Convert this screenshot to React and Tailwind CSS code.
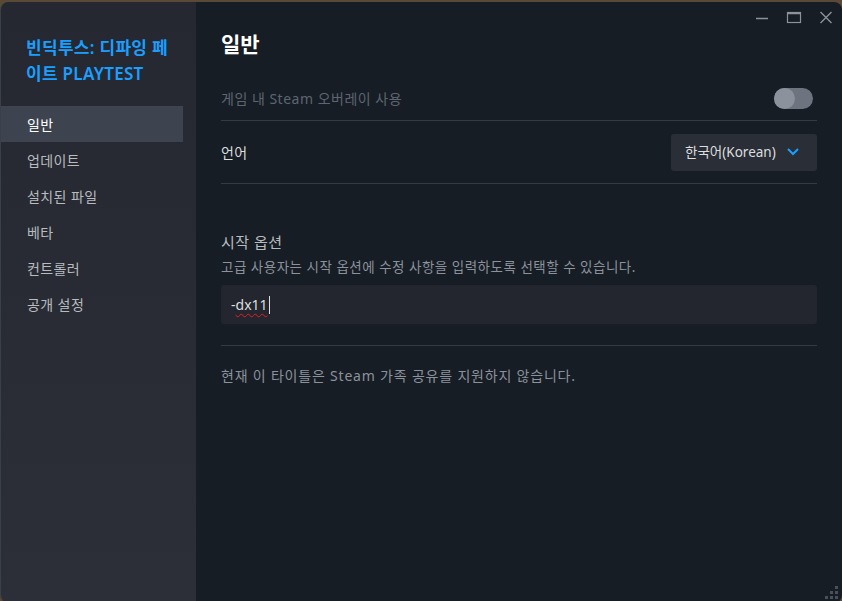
import React from "react";

const font = { fontFamily: "'Noto Sans', 'Noto Sans CJK KR', sans-serif" };

function NavItem({ label, active }) {
  return (
    <div
      className={`h-9 flex items-center pl-[26px] text-[14px] tracking-[0.4px] ${
        active ? "bg-[#3d4450] text-white" : "text-[#b8bcbf]"
      }`}
    >
      {label}
    </div>
  );
}

export default function App() {
  return (
    <div className="w-[842px] h-[601px] bg-[#5a4a35] overflow-hidden" style={font}>
      <div className="w-full h-full mt-[2px] rounded-t-[8px] rounded-b-[8px] overflow-hidden flex border-l border-[#3a3f48]">
        {/* Sidebar */}
        <div className="w-[195px] h-full bg-gradient-to-b from-[#252830] to-[#2c2f38] flex flex-col">
          <div className="pl-[25px] pr-3 pt-[33px] pb-[19px] text-[#1a9fff] text-[17px] leading-[26px] font-semibold tracking-[0.3px]">
            빈딕투스: 디파잉 페<br />이트 PLAYTEST
          </div>
          <div className="w-[182px] flex flex-col">
            <NavItem label="일반" active />
            <NavItem label="업데이트" />
            <NavItem label="설치된 파일" />
            <NavItem label="베타" />
            <NavItem label="컨트롤러" />
            <NavItem label="공개 설정" />
          </div>
        </div>

        {/* Main */}
        <div className="flex-1 h-full bg-[#171d25] relative flex flex-col pl-[25px] pr-[25px]">
          {/* Window controls */}
          <div className="absolute top-[6px] right-[8px] flex items-center gap-[16px] text-[#8b929a]">
            <svg width="16" height="16" viewBox="0 0 16 16">
              <line x1="2" y1="10.5" x2="14" y2="10.5" stroke="currentColor" strokeWidth="1.5" />
            </svg>
            <svg width="16" height="16" viewBox="0 0 16 16">
              <rect x="1.5" y="4.5" width="13" height="10" fill="none" stroke="currentColor" strokeWidth="1.2" />
              <line x1="1.5" y1="5.5" x2="14.5" y2="5.5" stroke="currentColor" strokeWidth="1.5" />
            </svg>
            <svg width="16" height="16" viewBox="0 0 16 16">
              <path d="M2.5 4 L13.5 15 M13.5 4 L2.5 15" stroke="currentColor" strokeWidth="1.4" fill="none" />
            </svg>
          </div>

          <div className="pt-[26px] text-white text-[21px] font-bold leading-[32px]">일반</div>

          <div className="mt-[16px] h-[45px] flex items-center justify-between border-b border-[#353a43]">
            <span className="text-[14px] text-[#5d6570] tracking-[0.5px]">게임 내 Steam 오버레이 사용</span>
            <div className="w-[39px] h-[21px] rounded-full bg-[#6d7480] relative mr-[4px]">
              <div className="absolute left-0 top-0 w-[21px] h-[21px] rounded-full bg-[#8b929c]" />
            </div>
          </div>

          <div className="h-[63px] flex items-center justify-between border-b border-[#353a43]">
            <span className="text-[14px] text-[#dcdedf] tracking-[0.4px]">언어</span>
            <div className="w-[146px] h-[37px] rounded-[3px] bg-[#2a2e37] flex items-center pl-[14px] gap-[10px]">
              <span className="text-[13.5px] text-[#dcdedf]">한국어(Korean)</span>
              <svg width="14" height="10" viewBox="0 0 14 10">
                <path d="M2 2 L7 7 L12 2" stroke="#1a9fff" strokeWidth="2" fill="none" />
              </svg>
            </div>
          </div>

          <div className="mt-[47px] text-[15px] text-[#b8bcbf] leading-[22px] tracking-[0.5px]">시작 옵션</div>
          <div className="mt-[5px] text-[13.5px] text-[#8b929a] leading-[18px] tracking-[0.5px]">
            고급 사용자는 시작 옵션에 수정 사항을 입력하도록 선택할 수 있습니다.
          </div>
          <div className="mt-[9px] h-[39px] bg-[#23262e] rounded-[3px] flex items-center pl-[10px] text-[14px] text-[#dcdedf]">
            <span>-</span>
            <span className="underline decoration-wavy decoration-[#e02020] decoration-1 underline-offset-[3px]">dx11</span>
            <span className="w-px h-[18px] bg-[#dcdedf] ml-px" />
          </div>
          <div className="mt-[21px] border-b border-[#353a43]" />

          <div className="mt-[19px] text-[14px] text-[#8b929a] leading-[22px] tracking-[0.8px]">
            현재 이 타이틀은 Steam 가족 공유를 지원하지 않습니다.
          </div>

          {/* Resize grip */}
          <div className="absolute right-[4px] bottom-[4px] grid grid-cols-3 gap-[2px]">
            <span className="w-[3px] h-[3px]" />
            <span className="w-[3px] h-[3px]" />
            <span className="w-[3px] h-[3px] bg-[#4a5058]" />
            <span className="w-[3px] h-[3px]" />
            <span className="w-[3px] h-[3px] bg-[#4a5058]" />
            <span className="w-[3px] h-[3px] bg-[#4a5058]" />
            <span className="w-[3px] h-[3px] bg-[#4a5058]" />
            <span className="w-[3px] h-[3px] bg-[#4a5058]" />
            <span className="w-[3px] h-[3px] bg-[#4a5058]" />
          </div>
        </div>
      </div>
    </div>
  );
}
